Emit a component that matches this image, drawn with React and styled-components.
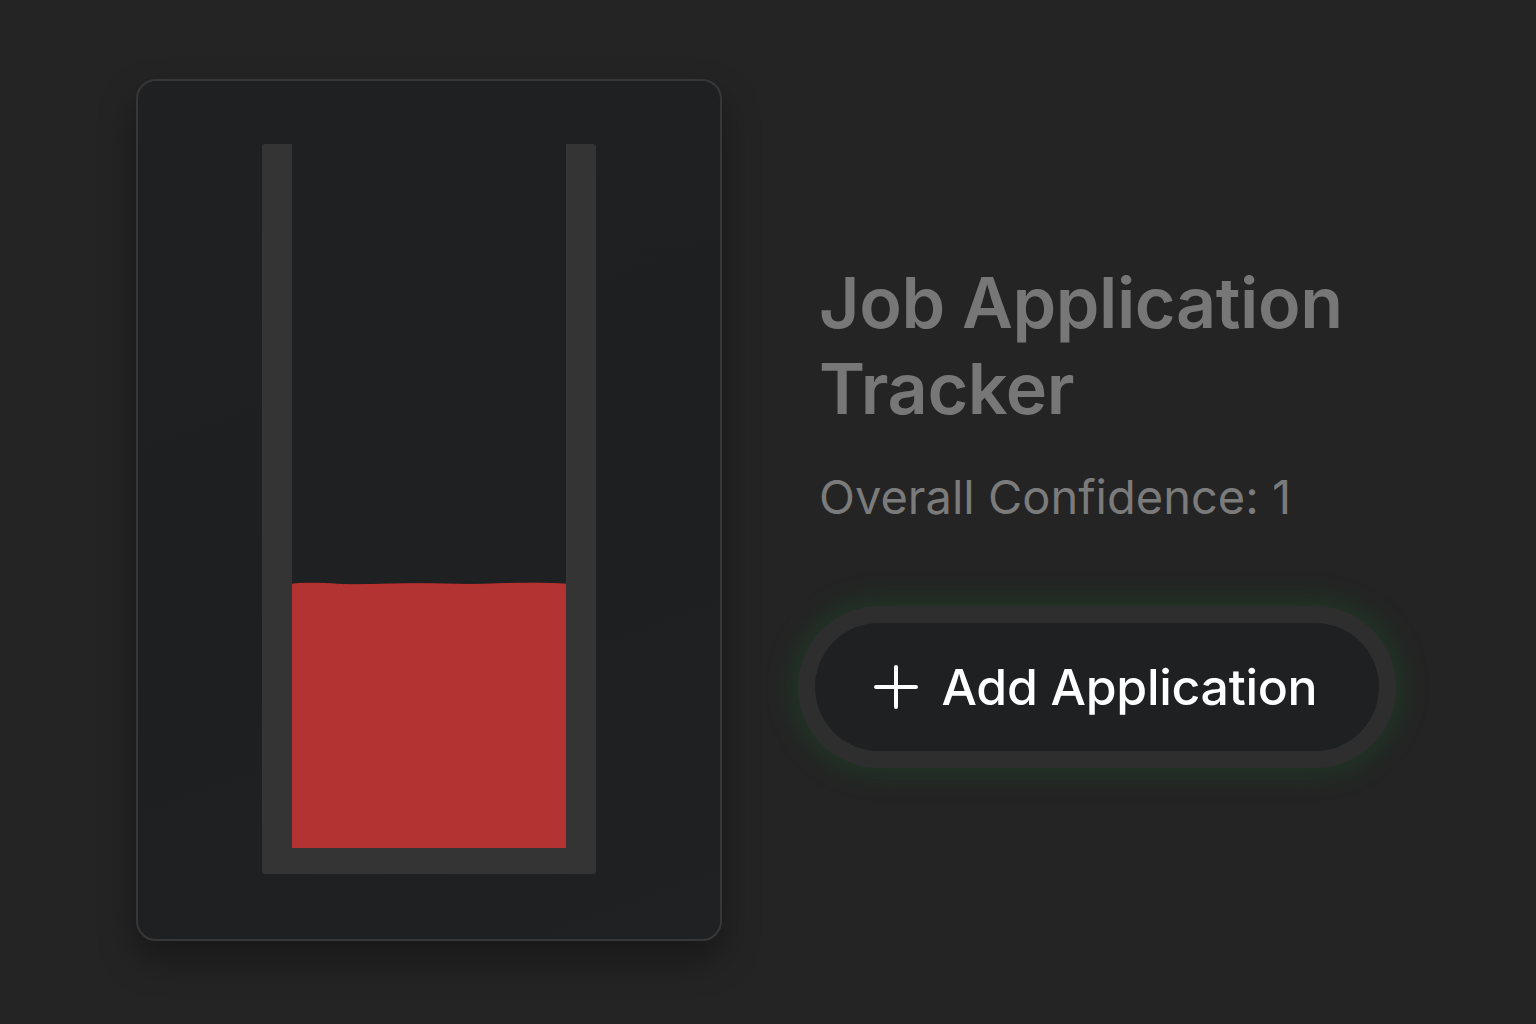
import React from 'react';
import styled, { createGlobalStyle } from 'styled-components';

const confidence = 1;

const App = () => {
  // liquid height in px for the current confidence
  const level = 267;
  return (
    <>
      <GlobalStyle />
      <Page>
        <Card>
          <Tube>
            <TubeInner>
              <Wave viewBox="0 0 274 8" preserveAspectRatio="none">
                <path
                  d="M0 3.2 C 14 1.6, 30 2.2, 48 3.4 S 90 2.6, 130 2.8 S 170 4, 200 3 S 250 1.8, 274 3.2 L274 8 L0 8 Z"
                  fill="#b33333"
                />
                <path
                  d="M0 3.2 C 14 1.6, 30 2.2, 48 3.4 S 90 2.6, 130 2.8 S 170 4, 200 3 S 250 1.8, 274 3.2"
                  fill="none"
                  stroke="#c4302e"
                  strokeWidth="1"
                />
              </Wave>
              <Liquid style={{ height: level - 5 }} />
            </TubeInner>
          </Tube>
        </Card>
        <Info>
          <Title>Job Application Tracker</Title>
          <Subtitle>Overall Confidence: {confidence}</Subtitle>
          <AddButton>
            <PlusIcon viewBox="0 0 46 46">
              <path d="M23 3 V43 M3 23 H43" stroke="#fff" strokeWidth="4" strokeLinecap="round" fill="none" />
            </PlusIcon>
            Add Application
          </AddButton>
        </Info>
      </Page>
    </>
  );
};

export default App;

const GlobalStyle = createGlobalStyle`
  body {
    margin: 0;
    background: #242424;
    font-family: Inter, "Noto Sans", sans-serif;
  }
`;

const Page = styled.div`
  height: 100vh;
  display: flex;
  align-items: center;
  gap: 93px;
  padding-left: 136px;
  box-sizing: border-box;
`;

const Card = styled.div`
  width: 586px;
  height: 862px;
  margin-bottom: 4px;
  box-sizing: border-box;
  border: 2px solid #373737;
  border-radius: 20px;
  background: linear-gradient(160deg, #1f2021 0%, #1e1f20 60%, #202122 100%);
  box-shadow: 0 18px 36px rgba(0, 0, 0, 0.35);
  display: flex;
  justify-content: center;
  padding-top: 63px;
`;

const Tube = styled.div`
  width: 334px;
  height: 730px;
  box-sizing: border-box;
  background: #343434;
  border-radius: 3px;
  padding: 0 30px 26px;
  display: flex;
`;

const TubeInner = styled.div`
  flex: 1;
  background: #1f2021;
  border-radius: 0 0 2px 2px;
  display: flex;
  flex-direction: column;
  justify-content: flex-end;
`;

const Wave = styled.svg`
  display: block;
  width: 100%;
  height: 8px;
  margin-bottom: -3px;
`;

const Liquid = styled.div`
  background: #b33333;
`;

const Info = styled.div`
  width: 564px;
  display: flex;
  flex-direction: column;
  padding-bottom: 13px;
`;

const Title = styled.h1`
  margin: 0 0 0 4px;
  font-size: 70px;
  line-height: 86px;
  font-weight: 600;
  letter-spacing: -0.4px;
  color: #777777;
`;

const Subtitle = styled.p`
  margin: 35px 0 0 4px;
  font-size: 47px;
  line-height: 60px;
  font-weight: 400;
  color: #7b7b7b;
`;

const AddButton = styled.button`
  margin-top: 96px;
  width: 564px;
  height: 128px;
  border: none;
  border-radius: 64px;
  background: #1f2021;
  box-shadow: 0 0 0 17px #2e2e2e, 0 0 28px 22px rgba(22, 100, 45, 0.32);
  display: flex;
  align-items: center;
  justify-content: center;
  gap: 23px;
  padding: 0 4px 0 0;
  color: #ffffff;
  font-family: Inter, "Noto Sans", sans-serif;
  font-size: 50px;
  font-weight: 500;
  letter-spacing: -0.3px;
  cursor: pointer;
`;

const PlusIcon = styled.svg`
  width: 46px;
  height: 46px;
  flex-shrink: 0;
`;
